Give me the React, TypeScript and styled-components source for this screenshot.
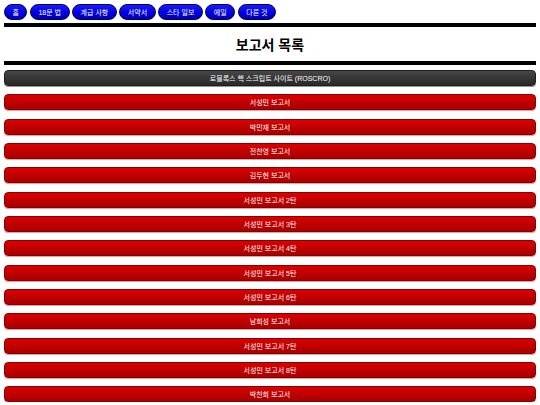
import styled, { createGlobalStyle } from "styled-components";

const GlobalStyle = createGlobalStyle`
  html, body {
    margin: 0;
    padding: 0;
    background: #ffffff;
    font-family: "Liberation Sans", "Noto Sans CJK KR", sans-serif;
  }
`;

const Page = styled.div`
  padding: 4px 4px 0 4px;
`;

const Nav = styled.nav`
  display: flex;
  gap: 2.5px;
  height: 16px;
`;

const NavPill = styled.a`
  display: flex;
  align-items: center;
  justify-content: center;
  height: 16px;
  box-sizing: border-box;
  padding: 0 7.5px;
  border-radius: 8px;
  background: linear-gradient(#1a1aff, #0000d8 60%, #0000b0);
  border: 1px solid #000066;
  color: #ffffff;
  font-size: 7px;
  text-decoration: none;
  white-space: nowrap;
`;

const Rule = styled.div`
  height: 4px;
  background: #000000;
`;

const TopRule = styled(Rule)`
  margin-top: 3px;
`;

const TitleBar = styled.div`
  height: 34px;
  display: flex;
  align-items: center;
  justify-content: center;
`;

const Title = styled.h1`
  margin: 0;
  font-size: 14px;
  font-weight: bold;
  color: #000000;
`;

const List = styled.div`
  display: flex;
  flex-direction: column;
  gap: 8.33px;
  margin-top: 5px;
`;

const Bar = styled.a<{ $dark?: boolean }>`
  display: flex;
  align-items: center;
  justify-content: center;
  height: 16px;
  box-sizing: border-box;
  border-radius: 4px;
  background: ${(p) =>
    p.$dark
      ? "linear-gradient(#474747, #363636 50%, #2a2a2a)"
      : "linear-gradient(#dc0000, #c00000 50%, #a80000)"};
  border: 1px solid ${(p) => (p.$dark ? "#1e1e1e" : "#8a0000")};
  box-shadow: 0 1px 0 ${(p) => (p.$dark ? "#999" : "#e8a0a0")};
  color: #ffffff;
  font-size: 7px;
  text-decoration: none;
  white-space: nowrap;
`;

const navItems = ["홈", "18문 법", "계급 사항", "서약서", "스타 일보", "에일", "다른 것"];

const reports = [
  "서성민 보고서",
  "박민재 보고서",
  "전찬영 보고서",
  "김두현 보고서",
  "서성민 보고서 2탄",
  "서성민 보고서 3탄",
  "서성민 보고서 4탄",
  "서성민 보고서 5탄",
  "서성민 보고서 6탄",
  "남희성 보고서",
  "서성민 보고서 7탄",
  "서성민 보고서 8탄",
  "박찬희 보고서",
];

export default function App() {
  return (
    <>
      <GlobalStyle />
      <Page>
        <Nav>
          {navItems.map((item) => (
            <NavPill key={item}>{item}</NavPill>
          ))}
        </Nav>
        <TopRule />
        <TitleBar>
          <Title>보고서 목록</Title>
        </TitleBar>
        <Rule />
        <List>
          <Bar $dark>로블록스 핵 스크립트 사이트 (ROSCRO)</Bar>
          {reports.map((r) => (
            <Bar key={r}>{r}</Bar>
          ))}
        </List>
      </Page>
    </>
  );
}
